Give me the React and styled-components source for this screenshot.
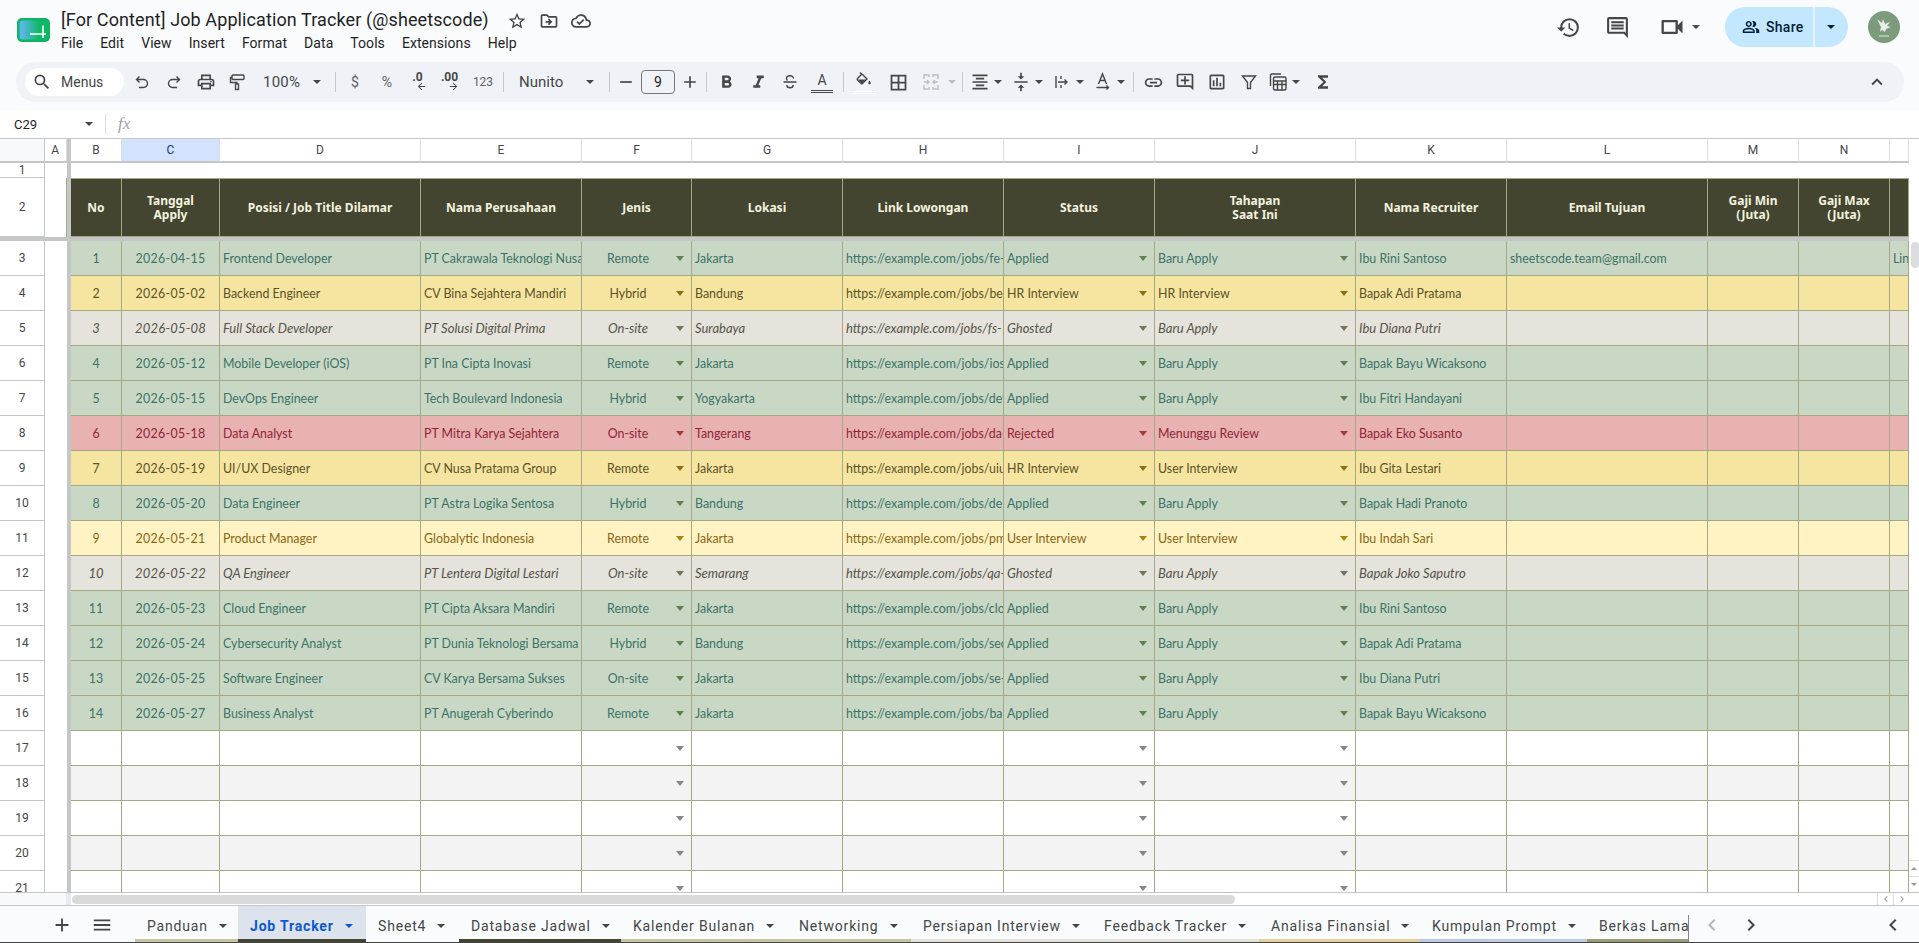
import React from "react";
import styled, { createGlobalStyle } from "styled-components";
import {
  MdSearch, MdOutlinePrint, MdRemove, MdAdd,
  MdBorderAll, MdFormatAlignCenter, MdVerticalAlignCenter, MdInsertLink,
  MdOutlineAddComment, MdOutlineInsertChart, MdFunctions,
  MdKeyboardArrowUp, MdHistory, MdOutlineComment, MdOutlineVideocam, MdOutlinePeopleAlt,
  MdStarBorder, MdOutlineDriveFileMove, MdOutlineCloudDone, MdMenu,
  MdChevronLeft, MdChevronRight, MdFormatBold, MdFormatItalic,
  MdArrowBack, MdArrowForward,
} from "react-icons/md";

const GlobalStyle = createGlobalStyle`
  html, body { margin: 0; padding: 0; height: 100%; overflow: hidden; background: #fff; }
  #root { height: 100%; }
  * { box-sizing: border-box; }
`;

const COLUMNS = "45px 21.5px 4.5px 51px 98px 201px 161px 110px 151px 161px 151px 201px 151px 201px 91px 91px 19px";
const LETTERS = ["B", "C", "D", "E", "F", "G", "H", "I", "J", "K", "L", "M", "N", "O"];
const HEADINGS = [
  "No", "Tanggal\nApply", "Posisi / Job Title Dilamar", "Nama Perusahaan", "Jenis", "Lokasi",
  "Link Lowongan", "Status", "Tahapan\nSaat Ini", "Nama Recruiter", "Email Tujuan",
  "Gaji Min\n(Juta)", "Gaji Max\n(Juta)", "",
];

const TONES = {
  green: { bg: "#c9d8c5", fg: "#3c7265", arrow: "#5f7f50" },
  yellow: { bg: "#f6e5a1", fg: "#5b5226", arrow: "#8a7210" },
  grey: { bg: "#e5e3db", fg: "#55534a", arrow: "#75735f" },
  red: { bg: "#e8b2b2", fg: "#8f2436", arrow: "#a33a3a" },
  cream: { bg: "#fff3c4", fg: "#8a6510", arrow: "#a5860f" },
  white: { bg: "#ffffff", fg: "#444", arrow: "#868686" },
  zebra: { bg: "#f3f3f3", fg: "#444", arrow: "#868686" },
};

const JOBS = [
  ["green", "1", "2026-04-15", "Frontend Developer", "PT Cakrawala Teknologi Nusantara", "Remote", "Jakarta", "https://example.com/jobs/fe-001", "Applied", "Baru Apply", "Ibu Rini Santoso", "sheetscode.team@gmail.com", "LinkedIn"],
  ["yellow", "2", "2026-05-02", "Backend Engineer", "CV Bina Sejahtera Mandiri", "Hybrid", "Bandung", "https://example.com/jobs/be-002", "HR Interview", "HR Interview", "Bapak Adi Pratama"],
  ["grey", "3", "2026-05-08", "Full Stack Developer", "PT Solusi Digital Prima", "On-site", "Surabaya", "https://example.com/jobs/fs-103", "Ghosted", "Baru Apply", "Ibu Diana Putri"],
  ["green", "4", "2026-05-12", "Mobile Developer (iOS)", "PT Ina Cipta Inovasi", "Remote", "Jakarta", "https://example.com/jobs/ios-104", "Applied", "Baru Apply", "Bapak Bayu Wicaksono"],
  ["green", "5", "2026-05-15", "DevOps Engineer", "Tech Boulevard Indonesia", "Hybrid", "Yogyakarta", "https://example.com/jobs/devops-1", "Applied", "Baru Apply", "Ibu Fitri Handayani"],
  ["red", "6", "2026-05-18", "Data Analyst", "PT Mitra Karya Sejahtera", "On-site", "Tangerang", "https://example.com/jobs/da-201", "Rejected", "Menunggu Review", "Bapak Eko Susanto"],
  ["yellow", "7", "2026-05-19", "UI/UX Designer", "CV Nusa Pratama Group", "Remote", "Jakarta", "https://example.com/jobs/uiux-1", "HR Interview", "User Interview", "Ibu Gita Lestari"],
  ["green", "8", "2026-05-20", "Data Engineer", "PT Astra Logika Sentosa", "Hybrid", "Bandung", "https://example.com/jobs/de-008", "Applied", "Baru Apply", "Bapak Hadi Pranoto"],
  ["cream", "9", "2026-05-21", "Product Manager", "Globalytic Indonesia", "Remote", "Jakarta", "https://example.com/jobs/pm-109", "User Interview", "User Interview", "Ibu Indah Sari"],
  ["grey", "10", "2026-05-22", "QA Engineer", "PT Lentera Digital Lestari", "On-site", "Semarang", "https://example.com/jobs/qa-110", "Ghosted", "Baru Apply", "Bapak Joko Saputro"],
  ["green", "11", "2026-05-23", "Cloud Engineer", "PT Cipta Aksara Mandiri", "Remote", "Jakarta", "https://example.com/jobs/cloud-1", "Applied", "Baru Apply", "Ibu Rini Santoso"],
  ["green", "12", "2026-05-24", "Cybersecurity Analyst", "PT Dunia Teknologi Bersama", "Hybrid", "Bandung", "https://example.com/jobs/sec-112", "Applied", "Baru Apply", "Bapak Adi Pratama"],
  ["green", "13", "2026-05-25", "Software Engineer", "CV Karya Bersama Sukses", "On-site", "Jakarta", "https://example.com/jobs/se-113", "Applied", "Baru Apply", "Ibu Diana Putri"],
  ["green", "14", "2026-05-27", "Business Analyst", "PT Anugerah Cyberindo", "Remote", "Jakarta", "https://example.com/jobs/ba-014", "Applied", "Baru Apply", "Bapak Bayu Wicaksono"],
];

const TABS = [
  { name: "Panduan", w: 103, strip: "#c9c3a6" },
  { name: "Job Tracker", w: 128, strip: "#434531", active: true },
  { name: "Sheet4", w: 93, strip: "transparent" },
  { name: "Database Jadwal", w: 162, strip: "#434531" },
  { name: "Kalender Bulanan", w: 166, strip: "#c9c3a6" },
  { name: "Networking", w: 124, strip: "#c9c3a6" },
  { name: "Persiapan Interview", w: 181, strip: "#e3e1d8" },
  { name: "Feedback Tracker", w: 167, strip: "#e3e1d8" },
  { name: "Analisa Finansial", w: 161, strip: "#e4d09e" },
  { name: "Kumpulan Prompt", w: 167, strip: "#bccbe0" },
  { name: "Berkas Lama", w: 110, strip: "#989d78" },
];

const MENUS = ["File", "Edit", "View", "Insert", "Format", "Data", "Tools", "Extensions", "Help"];

const Page = styled.div`
  height: 100vh;
  display: flex;
  flex-direction: column;
  font-family: Roboto, "Liberation Sans", sans-serif;
  color: #444746;
  overflow: hidden;
`;

const Chrome = styled.header`
  height: 110px;
  flex: none;
  background: #f9fbfd;
  padding-bottom: 8px;
  display: flex;
  flex-direction: column;
`;

const TitleBar = styled.div`
  height: 62px;
  display: flex;
  align-items: flex-start;
  padding-left: 17px;
`;

const LogoBox = styled.svg`
  width: 33px;
  height: 24px;
  margin-top: 18px;
  flex: none;
`;

const TitleBlock = styled.div`
  margin-left: 11px;
  padding-top: 8px;
`;

const TitleRow = styled.div`
  display: flex;
  align-items: center;
  height: 24px;
`;

const DocName = styled.div`
  font-size: 18px;
  line-height: 24px;
  color: #1f1f1f;
  white-space: nowrap;
  letter-spacing: 0.1px;
`;

const TitleIcons = styled.div`
  display: flex;
  gap: 12px;
  margin-left: 18px;
  font-size: 20px;
  color: #444746;
  margin-top: 2px;
  svg { display: block; }
`;

const MenuRow = styled.nav`
  display: flex;
  margin-top: 1px;
`;

const MenuItem = styled.span`
  font-size: 14px;
  line-height: 20px;
  color: #1f1f1f;
  margin-right: 17px;
  letter-spacing: 0.06px;
`;

const RightActions = styled.div`
  margin-left: auto;
  display: flex;
  align-items: center;
  height: 54px;
  color: #444746;
  padding-right: 19px;
`;

const ActionIcon = styled.span`
  display: flex;
  font-size: 25px;
  margin-right: ${(p) => p.$gap || 0}px;
`;

const ShareButton = styled.div`
  margin-left: 25px;
  width: 123px;
  height: 40px;
  border-radius: 20px;
  background: #c2e7ff;
  display: flex;
  color: #001d35;
`;

const ShareMain = styled.div`
  width: 90px;
  display: flex;
  align-items: center;
  padding-left: 17px;
  gap: 6px;
  font-size: 14px;
  font-weight: 500;
  letter-spacing: 0.3px;
  border-right: 2px solid #e3f3ff;
`;

const ShareCaret = styled.div`
  flex: 1;
  display: flex;
  align-items: center;
  justify-content: center;
  padding-right: 2px;
`;

const Caret = styled.i`
  display: block;
  flex: none;
  width: 0;
  height: 0;
  border-left: ${(p) => p.$size || 4}px solid transparent;
  border-right: ${(p) => p.$size || 4}px solid transparent;
  border-top: ${(p) => p.$size || 4}px solid ${(p) => p.$color || "currentColor"};
  transform: ${(p) => (p.$up ? "rotate(180deg)" : "none")};
`;

const Avatar = styled.svg`
  width: 32px;
  height: 32px;
  margin-left: 20px;
  flex: none;
`;

const Toolbar = styled.div`
  height: 40px;
  margin: 0 15px 0 16px;
  border-radius: 20px;
  background: #eff3f8;
  display: flex;
  align-items: center;
  padding-left: 9px;
  color: #444746;
`;

const MenuSearch = styled.div`
  width: 99px;
  height: 28px;
  border-radius: 14px;
  background: #fff;
  display: flex;
  align-items: center;
  padding-left: 7px;
  gap: 9px;
  font-size: 14px;
  margin-right: 2px;
  flex: none;
`;

const Tool = styled.div`
  width: ${(p) => p.$w || 32}px;
  height: 28px;
  flex: none;
  display: flex;
  align-items: center;
  justify-content: center;
  font-size: ${(p) => p.$size || 20}px;
  margin-left: ${(p) => p.$l || 0}px;
  color: ${(p) => (p.$off ? "#bcbfc2" : "#444746")};
`;

const TextTool = styled(Tool)`
  font-size: ${(p) => p.$size || 13}px;
  font-weight: ${(p) => p.$weight || 400};
  color: #5c5f5e;
`;

const DecimalTool = styled(Tool)`
  flex-direction: column;
  padding-right: 3px;
  font-size: 12px;
  font-weight: 700;
  line-height: 11px;
  color: #444746;
  svg { font-size: 11px; margin-top: -2px; margin-left: 8px; }
`;

const ToolCaret = styled.div`
  width: ${(p) => p.$w || 12}px;
  margin-right: ${(p) => p.$gap ?? 5}px;
  flex: none;
  display: flex;
  justify-content: center;
  color: ${(p) => (p.$off ? "#bcbfc2" : "#444746")};
`;

const Divider = styled.span`
  width: 1px;
  height: 20px;
  flex: none;
  background: #c7c7c7;
  margin: 0 ${(p) => p.$r ?? 3}px 0 ${(p) => p.$l ?? 0}px;
`;

const ZoomSelect = styled.div`
  width: 73px;
  height: 28px;
  flex: none;
  display: flex;
  align-items: center;
  justify-content: space-between;
  padding: 0 6px 0 9px;
  font-size: 15px;
  letter-spacing: 0.2px;
`;

const FontSelect = styled.div`
  width: 105px;
  height: 28px;
  flex: none;
  display: flex;
  align-items: center;
  justify-content: space-between;
  padding: 0 15px;
  font-size: 15px;
`;

const SizeBox = styled.div`
  width: 34px;
  height: 24px;
  flex: none;
  border: 1px solid #747775;
  border-radius: 4px;
  display: flex;
  align-items: center;
  justify-content: center;
  font-size: 14px;
  color: #1f1f1f;
`;

const ColorLetter = styled.div`
  width: 22px;
  height: 21px;
  text-align: center;
  font-size: 14px;
  line-height: 16px;
  border-bottom: 3px double #444746;
`;

const FillSwatch = styled.div`
  width: 23px;
  height: 23px;
  display: flex;
  justify-content: center;
  border-bottom: 3px double #fff;
`;

const Collapse = styled(Tool)`
  margin-left: auto;
  margin-right: 11px;
  font-size: 22px;
`;

const FormulaBar = styled.div`
  height: 28px;
  flex: none;
  background: #fff;
  display: flex;
  align-items: center;
`;

const NameBox = styled.div`
  width: 106px;
  padding: 0 12px 0 14px;
  display: flex;
  align-items: center;
  justify-content: space-between;
  font-size: 13px;
  color: #1f1f1f;
  border-right: 1px solid #dadce0;
  height: 20px;
`;

const FxMark = styled.span`
  margin-left: 12px;
  font-family: "Liberation Serif", serif;
  font-style: italic;
  font-size: 17px;
  color: #a0a3a6;
`;

const SheetArea = styled.div`
  flex: 1;
  min-height: 0;
  display: flex;
  background: #fff;
`;

const Grid = styled.div`
  width: 1909px;
  flex: none;
  overflow: hidden;
  display: flex;
  flex-direction: column;
`;

const Line = styled.div`
  display: grid;
  grid-template-columns: ${COLUMNS};
  height: ${(p) => p.$h}px;
  flex: none;
`;

const Corner = styled.div`
  background: #f8f9fa;
  border-top: 1px solid #c4c7c5;
  border-bottom: 2px solid #c4c7c5;
  border-right: 1px solid #c4c7c5;
`;

const ColLabel = styled.div`
  border-top: 1px solid #c4c7c5;
  border-bottom: 2px solid #c4c7c5;
  border-right: 1px solid #dadce0;
  background: ${(p) => (p.$active ? "#d3e3fd" : "#fff")};
  color: ${(p) => (p.$active ? "#0b3a82" : "#444746")};
  font-size: 12px;
  display: flex;
  align-items: center;
  justify-content: center;
`;

const RowLabel = styled.div`
  border-right: 1px solid #c4c7c5;
  border-bottom: 1px solid #c4c7c5;
  color: #444746;
  font-size: 12px;
  display: flex;
  align-items: center;
  justify-content: center;
`;

const SpareCol = styled.div`
  border-right: ${(p) => (p.$edge ? "1px solid #a5a884" : "none")};
`;

const FreezeBar = styled.div`
  background: #c4c7c5;
`;

const Blank = styled.div`
  grid-column: 4 / -1;
`;

const FreezeRow = styled.div`
  height: 4px;
  flex: none;
  background: #c4c7c5;
`;

const HeadCell = styled.div`
  background: #434531;
  color: #f4f2df;
  border-top: 1px solid #a5a884;
  border-right: 1px solid #a5a884;
  border-bottom: 1px solid #a5a884;
  font-family: "Noto Sans", sans-serif;
  font-size: 12px;
  font-weight: 700;
  line-height: 14px;
  white-space: pre-line;
  text-align: center;
  display: flex;
  align-items: center;
  justify-content: center;
  padding: 0 3px;
`;

const Cell = styled.div`
  position: relative;
  background: ${(p) => TONES[p.$tone].bg};
  color: ${(p) => TONES[p.$tone].fg};
  font-style: ${(p) => (p.$tone === "grey" ? "italic" : "normal")};
  font-size: ${(p) => (p.$tone === "grey" ? 13 : 12.4)}px;
  letter-spacing: ${(p) => (p.$date ? (p.$tone === "grey" ? 0.2 : 0.35) : 0)}px;
  border-right: 1px solid #a5a884;
  border-bottom: 1px solid #a5a884;
  font-family: Lato, "Noto Sans", sans-serif;
  line-height: 35px;
  white-space: nowrap;
  overflow: hidden;
  padding: 0 ${(p) => (p.$picker === "center" ? 20 : 3)}px 0 3px;
  text-align: ${(p) => (p.$center || p.$date || p.$picker === "center" ? "center" : "left")};
`;

const CellArrow = styled.span`
  position: absolute;
  right: 7px;
  top: 15px;
  width: 0;
  height: 0;
  border-left: 4px solid transparent;
  border-right: 4px solid transparent;
  border-top: 5px solid ${(p) => TONES[p.$tone].arrow};
`;

const VScroll = styled.div`
  width: 10px;
  flex: none;
  display: flex;
  flex-direction: column;
  border-top: 1px solid #c4c7c5;
  background: #fff;
`;

const VThumb = styled.div`
  margin: 103px 0 0 2px;
  width: 8px;
  height: 26px;
  border-radius: 4px;
  background: #dadce0;
`;

const VButton = styled.div`
  height: 16px;
  display: flex;
  align-items: center;
  justify-content: center;
  border-top: 1px solid #dadce0;
  color: #9a9a9a;
  margin-top: ${(p) => (p.$push ? "auto" : 0)};
`;

const HScroll = styled.div`
  height: 13px;
  flex: none;
  display: flex;
  align-items: center;
  background: #fff;
  border-top: 1px solid #c4c7c5;
`;

const HLeft = styled.div`
  width: 66px;
  height: 100%;
  background: #f8f9fa;
  border-right: 5px solid #e4e9f2;
  flex: none;
  margin-right: 1px;
  box-sizing: content-box;
`;

const HThumb = styled.div`
  width: 1163px;
  height: 9px;
  border-radius: 5px;
  background: #dadada;
  flex: none;
`;

const HArrows = styled.div`
  margin-left: auto;
  margin-right: 10px;
  display: flex;
  height: 100%;
  color: #9a9a9a;
`;

const HArrow = styled.div`
  width: 16px;
  display: flex;
  align-items: center;
  justify-content: center;
  border-left: 1px solid #dadce0;
`;

const TabBar = styled.footer`
  height: 38px;
  flex: none;
  background: #f9fbfd;
  border-top: 1px solid #c4c7c5;
  border-bottom: 1px solid #444;
  display: flex;
  align-items: stretch;
  color: #444746;
`;

const BarIcon = styled.div`
  width: ${(p) => p.$w || 32}px;
  margin-left: ${(p) => p.$l || 0}px;
  padding-top: 2px;
  flex: none;
  display: flex;
  align-items: center;
  justify-content: center;
  font-size: ${(p) => p.$size || 22}px;
  color: ${(p) => p.$color || "#444746"};
`;

const TabList = styled.div`
  width: 1553px;
  margin-left: 17px;
  flex: none;
  display: flex;
  overflow: hidden;
`;

const TabEdge = styled.span`
  width: 1px;
  flex: none;
  margin-top: 9px;
  background: #80868b;
`;

const Tab = styled.div`
  width: ${(p) => p.$w}px;
  flex: none;
  padding-left: 12px;
  padding-top: 3px;
  display: flex;
  align-items: center;
  font-size: 14px;
  font-weight: ${(p) => (p.$active ? 700 : 400)};
  letter-spacing: 0.82px;
  white-space: nowrap;
  background: ${(p) => (p.$active ? "#dde3ec" : "transparent")};
  color: ${(p) => (p.$active ? "#0b57d0" : "#444746")};
  box-shadow: inset 0 -3px 0 ${(p) => p.$strip};
`;

const TabCaret = styled.span`
  margin-left: 11px;
  display: flex;
`;

function Logo() {
  return (
    <LogoBox viewBox="0 0 33 24">
      <defs>
        <linearGradient id="sheetLogo" x1="0" x2="1" y1="0" y2="0">
          <stop offset="0.08" stopColor="#5cb6ec" />
          <stop offset="0.7" stopColor="#10b866" />
        </linearGradient>
      </defs>
      <rect width="33" height="24" rx="5" fill="#0db561" />
      <rect x="2.5" y="2.5" width="28" height="19" rx="3" fill="url(#sheetLogo)" />
      <path d="M13 16h16M26 7.5V20" stroke="#fff" strokeWidth="1.6" />
    </LogoBox>
  );
}

function Bird() {
  return (
    <Avatar viewBox="0 0 32 32">
      <circle cx="16" cy="16" r="16" fill="#7c9a7c" />
      <path d="M9 8l5 4 1-4 2 5 5-2-3 4 4 1-5 2-1 3-3-2-2 2 1-5z" fill="#e8eee6" />
      <path d="M11 25h10" stroke="#dfe8dd" strokeWidth="1" />
    </Avatar>
  );
}

// hand drawn toolbar icons, the thin ones that the md set draws too heavy
function Stroke({ w = 18, h = 18, children }) {
  return (
    <svg width={w} height={h} viewBox={`0 0 ${w} ${h}`} fill="none" stroke="currentColor" strokeWidth="1.4">
      {children}
    </svg>
  );
}

const UndoIcon = () => <Stroke><path d="M6.5 3.5L3.5 6.5l3 3M3.5 6.5h7a3.5 3.5 0 0 1 0 8H6" /></Stroke>;
const RedoIcon = () => <Stroke><path d="M11.5 3.5l3 3-3 3M14.5 6.5h-7a3.5 3.5 0 0 0 0 8H12" /></Stroke>;
const PaintIcon = () => (
  <Stroke>
    <rect x="3" y="2" width="12" height="4.5" rx="1" />
    <path d="M3 4.5H1.5V9.5H8V11" />
    <rect x="6.5" y="11" width="3" height="5.5" />
  </Stroke>
);
const StrikeIcon = () => <Stroke><path d="M12.5 5.5a3.5 2.8 0 0 0-7 0c0 .9.4 1.6 1 2M2.5 9h13M5.8 12a3.2 2.8 0 0 0 6.4 0" /></Stroke>;
const FilterIcon = () => <Stroke><path d="M2.5 3h13L10.5 9.5v6h-3v-6z" /></Stroke>;
const WrapIcon = () => <Stroke><path d="M3 3v12M8 3v3M8 8.5v1M8 12v3M5 9h9M11.5 6.5L14 9l-2.5 2.5" /></Stroke>;
const RotateIcon = () => <Stroke h={20}><path d="M4.5 12L8.5 2l4 10M6 8.5h5M2.5 15.5h12M12.5 13.5l2 2-2 2" /></Stroke>;
const MergeIcon = () => <Stroke><path d="M2 6V2h5v2M16 6V2h-5v2M2 12v4h5v-2M16 12v4h-5v-2M2 9h5M5 7l2 2-2 2M16 9h-5M13 7l-2 2 2 2" /></Stroke>;
const TableIcon = () => (
  <Stroke w={20} h={20}>
    <path d="M2.5 14V3.5A1.5 1.5 0 0 1 4 2h9" />
    <rect x="5.5" y="5" width="12.5" height="13" rx="1.5" />
    <path d="M5.5 9H18M5.5 12.5H18M9.5 9v9M14 9v9" />
  </Stroke>
);
const BucketIcon = () => (
  <svg width="18" height="18" viewBox="0 0 18 18" fill="none" stroke="currentColor" strokeWidth="1.4">
    <path d="M5 1.5L7 3.5M7 3l5 5-4.5 4.5a1 1 0 0 1-1.4 0L2.5 9a1 1 0 0 1 0-1.4L7 3" />
    <path d="M3 8.5h8l-3.5 3.5a1 1 0 0 1-1.4 0z" fill="currentColor" stroke="none" />
    <path d="M14.5 9.5c.8 1.2 1.3 1.8 1.3 2.5a1.3 1.3 0 0 1-2.6 0c0-.7.5-1.3 1.3-2.5z" fill="currentColor" stroke="none" />
  </svg>
);

function JobRow({ job, rowNumber }) {
  const [tone, no, date, title, company, jenis, lokasi, link, status, tahap, recruiter, email, source] = job;
  return (
    <Line $h={35}>
      <RowLabel>{rowNumber}</RowLabel>
      <SpareCol />
      <FreezeBar />
      <Cell $tone={tone} $center>{no}</Cell>
      <Cell $tone={tone} $date>{date}</Cell>
      <Cell $tone={tone}>{title}</Cell>
      <Cell $tone={tone}>{company}</Cell>
      <Cell $tone={tone} $picker="center">{jenis}<CellArrow $tone={tone} /></Cell>
      <Cell $tone={tone}>{lokasi}</Cell>
      <Cell $tone={tone}>{link}</Cell>
      <Cell $tone={tone}>{status}<CellArrow $tone={tone} /></Cell>
      <Cell $tone={tone}>{tahap}<CellArrow $tone={tone} /></Cell>
      <Cell $tone={tone}>{recruiter}</Cell>
      <Cell $tone={tone}>{email}</Cell>
      <Cell $tone={tone} />
      <Cell $tone={tone} />
      <Cell $tone={tone}>{source}</Cell>
    </Line>
  );
}

function EmptyRow({ rowNumber }) {
  const tone = rowNumber % 2 === 0 ? "zebra" : "white";
  return (
    <Line $h={35}>
      <RowLabel>{rowNumber}</RowLabel>
      <SpareCol />
      <FreezeBar />
      {LETTERS.map((l) => (
        <Cell key={l} $tone={tone}>
          {(l === "F" || l === "I" || l === "J") && <CellArrow $tone={tone} />}
        </Cell>
      ))}
    </Line>
  );
}

export default function App() {
  return (
    <Page>
      <GlobalStyle />
      <Chrome>
        <TitleBar>
          <Logo />
          <TitleBlock>
            <TitleRow>
              <DocName>[For Content] Job Application Tracker (@sheetscode)</DocName>
              <TitleIcons>
                <MdStarBorder />
                <MdOutlineDriveFileMove />
                <MdOutlineCloudDone />
              </TitleIcons>
            </TitleRow>
            <MenuRow>
              {MENUS.map((m) => <MenuItem key={m}>{m}</MenuItem>)}
            </MenuRow>
          </TitleBlock>
          <RightActions>
            <ActionIcon $gap={24}><MdHistory /></ActionIcon>
            <ActionIcon $gap={28}><MdOutlineComment /></ActionIcon>
            <ActionIcon $gap={6}><MdOutlineVideocam style={{ fontSize: 28 }} /></ActionIcon>
            <Caret />
            <ShareButton>
              <ShareMain><MdOutlinePeopleAlt size={18} />Share</ShareMain>
              <ShareCaret><Caret /></ShareCaret>
            </ShareButton>
            <Bird />
          </RightActions>
        </TitleBar>
        <Toolbar>
          <MenuSearch><MdSearch size={20} />Menus</MenuSearch>
          <Tool><UndoIcon /></Tool>
          <Tool><RedoIcon /></Tool>
          <Tool><MdOutlinePrint /></Tool>
          <Tool><PaintIcon /></Tool>
          <ZoomSelect>100%<Caret /></ZoomSelect>
          <Divider $l={8} />
          <TextTool $size={14}>$</TextTool>
          <TextTool $size={14}>%</TextTool>
          <DecimalTool>.0<MdArrowBack /></DecimalTool>
          <DecimalTool>.00<MdArrowForward /></DecimalTool>
          <TextTool $size={12}>123</TextTool>
          <Divider $l={4} $r={0} />
          <FontSelect>Nunito<Caret /></FontSelect>
          <Divider $r={0} />
          <Tool $w={31}><MdRemove /></Tool>
          <SizeBox>9</SizeBox>
          <Tool $w={30}><MdAdd /></Tool>
          <Divider $l={1} $r={3} />
          <Tool $size={21}><MdFormatBold /></Tool>
          <Tool $size={21}><MdFormatItalic /></Tool>
          <Tool><StrikeIcon /></Tool>
          <Tool><ColorLetter>A</ColorLetter></Tool>
          <Divider $l={5} $r={4} />
          <Tool><FillSwatch><BucketIcon /></FillSwatch></Tool>
          <Tool $size={21} $l={2}><MdBorderAll /></Tool>
          <Tool $off $l={1}><MergeIcon /></Tool>
          <ToolCaret $off $w={10} $gap={5}><Caret /></ToolCaret>
          <Divider $r={5} />
          <Tool $w={24}><MdFormatAlignCenter /></Tool>
          <ToolCaret><Caret /></ToolCaret>
          <Tool $w={24}><MdVerticalAlignCenter /></Tool>
          <ToolCaret><Caret /></ToolCaret>
          <Tool $w={24}><WrapIcon /></Tool>
          <ToolCaret><Caret /></ToolCaret>
          <Tool $w={24}><RotateIcon /></Tool>
          <ToolCaret><Caret /></ToolCaret>
          <Divider $l={1} />
          <Tool $size={21}><MdInsertLink /></Tool>
          <Tool><MdOutlineAddComment /></Tool>
          <Tool><MdOutlineInsertChart /></Tool>
          <Tool><FilterIcon /></Tool>
          <Tool $w={24} $l={1}><TableIcon /></Tool>
          <ToolCaret><Caret /></ToolCaret>
          <Tool><MdFunctions /></Tool>
          <Collapse><MdKeyboardArrowUp /></Collapse>
        </Toolbar>
      </Chrome>

      <FormulaBar>
        <NameBox>C29<Caret $color="#444746" /></NameBox>
        <FxMark>fx</FxMark>
      </FormulaBar>

      <SheetArea>
        <Grid>
          <Line $h={25}>
            <Corner />
            <ColLabel>A</ColLabel>
            <FreezeBar />
            {LETTERS.map((l) => <ColLabel key={l} $active={l === "C"}>{l === "O" ? "" : l}</ColLabel>)}
          </Line>
          <Line $h={15}>
            <RowLabel>1</RowLabel>
            <SpareCol />
            <FreezeBar />
            <Blank />
          </Line>
          <Line $h={59}>
            <RowLabel>2</RowLabel>
            <SpareCol $edge />
            <FreezeBar />
            {HEADINGS.map((h, i) => <HeadCell key={i}>{h}</HeadCell>)}
          </Line>
          <FreezeRow />
          {JOBS.map((job, i) => <JobRow key={job[1]} job={job} rowNumber={i + 3} />)}
          {[17, 18, 19, 20, 21].map((n) => <EmptyRow key={n} rowNumber={n} />)}
        </Grid>
        <VScroll>
          <VThumb />
          <VButton $push><Caret $size={3} $up /></VButton>
          <VButton><Caret $size={3} /></VButton>
        </VScroll>
      </SheetArea>

      <HScroll>
        <HLeft />
        <HThumb />
        <HArrows>
          <HArrow><MdChevronLeft size={12} /></HArrow>
          <HArrow><MdChevronRight size={12} /></HArrow>
        </HArrows>
      </HScroll>

      <TabBar>
        <BarIcon $l={46}><MdAdd /></BarIcon>
        <BarIcon $l={8}><MdMenu /></BarIcon>
        <TabList>
          {TABS.map((t) => (
            <Tab key={t.name} $w={t.w} $strip={t.strip} $active={t.active}>
              {t.name}
              <TabCaret><Caret $size={4} /></TabCaret>
            </Tab>
          ))}
        </TabList>
        <TabEdge />
        <BarIcon $l={7} $color="#b4b7b9" $size={24}><MdChevronLeft /></BarIcon>
        <BarIcon $l={7} $size={24}><MdChevronRight /></BarIcon>
        <BarIcon $l={110} $size={24}><MdChevronLeft /></BarIcon>
      </TabBar>
    </Page>
  );
}
